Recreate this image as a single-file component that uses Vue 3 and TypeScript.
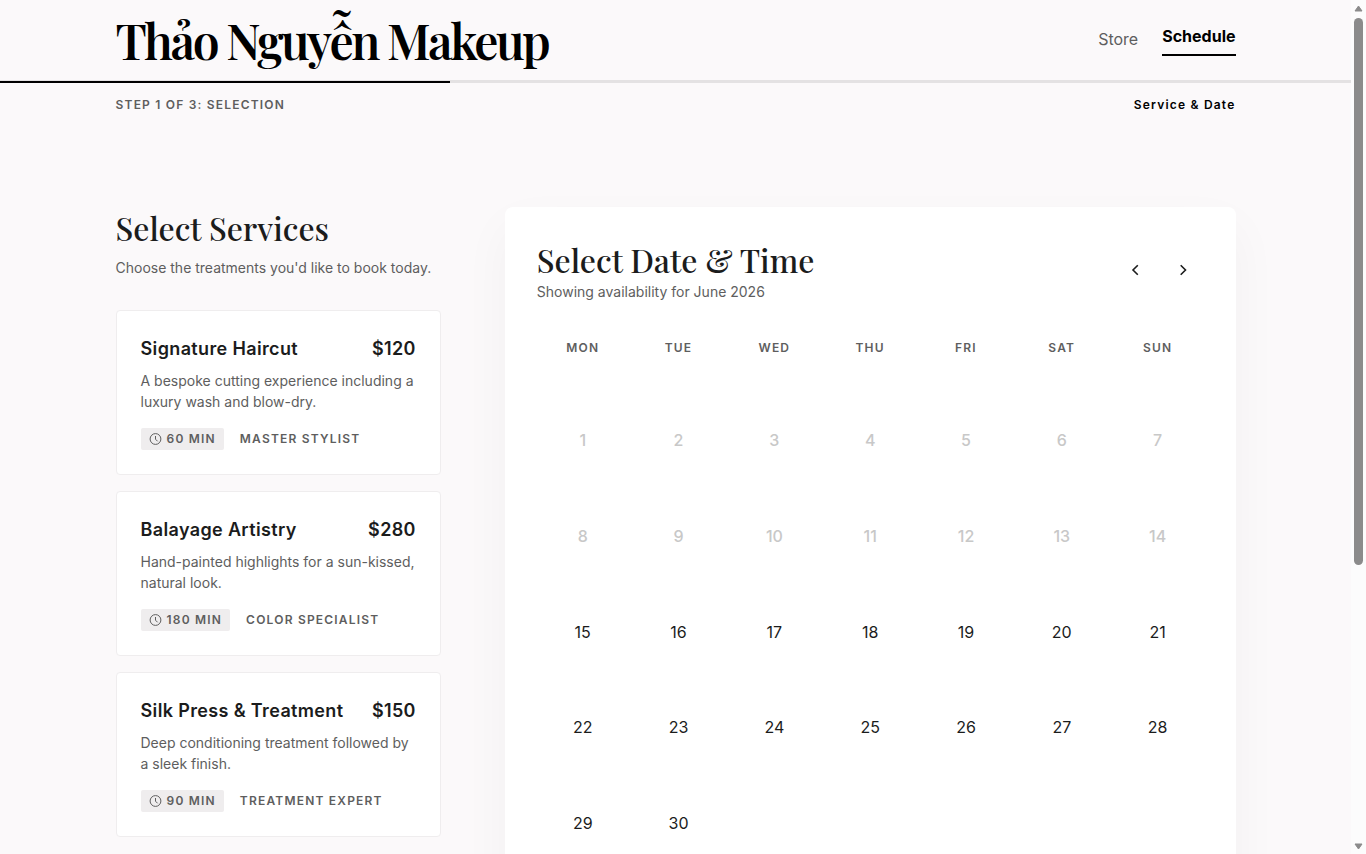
<script setup lang="ts">
interface Service {
  id: string
  name: string
  price: string
  description: string
  minutes: number
  staff: string
}

interface Day {
  date: number
  past: boolean
}

const services: Service[] = [
  {
    id: 'haircut',
    name: 'Signature Haircut',
    price: '$120',
    description: 'A bespoke cutting experience including a luxury wash and blow-dry.',
    minutes: 60,
    staff: 'Master Stylist',
  },
  {
    id: 'balayage',
    name: 'Balayage Artistry',
    price: '$280',
    description: 'Hand-painted highlights for a sun-kissed, natural look.',
    minutes: 180,
    staff: 'Color Specialist',
  },
  {
    id: 'silk-press',
    name: 'Silk Press & Treatment',
    price: '$150',
    description: 'Deep conditioning treatment followed by a sleek finish.',
    minutes: 90,
    staff: 'Treatment Expert',
  },
]

const weekdays: string[] = ['Mon', 'Tue', 'Wed', 'Thu', 'Fri', 'Sat', 'Sun']
const days: Day[] = Array.from({ length: 30 }, (_, i) => ({ date: i + 1, past: i < 14 }))
</script>

<template>
  <div class="window">
    <div class="page">
      <header class="header">
        <div class="container bar">
          <a class="brand" href="#">Thảo Nguyễn Makeup</a>
          <nav class="nav">
            <a class="link" href="#store">Store</a>
            <a class="link active" href="#schedule" aria-current="page">Schedule</a>
          </nav>
        </div>
      </header>
      <div class="progress"><div class="progress-fill"></div></div>
      <div class="container steps">
        <span class="step">Step 1 of 3: Selection</span>
        <span class="step-name">Service &amp; Date</span>
      </div>

      <main class="container content">
        <section>
          <div class="intro">
            <h2 class="heading">Select Services</h2>
            <p class="sub">Choose the treatments you'd like to book today.</p>
          </div>
          <div class="services">
            <button v-for="s in services" :key="s.id" type="button" class="service">
              <span class="service-head">
                <span>{{ s.name }}</span>
                <span>{{ s.price }}</span>
              </span>
              <span class="description">{{ s.description }}</span>
              <span class="meta">
                <span class="duration">
                  <svg class="clock" viewBox="0 0 14 14" aria-hidden="true">
                    <circle cx="6.5" cy="7" r="5.4" />
                    <path d="M6.5 4v3.2l2.1 2.1" />
                  </svg>
                  {{ s.minutes }} min
                </span>
                <span>{{ s.staff }}</span>
              </span>
            </button>
          </div>
        </section>

        <section class="calendar">
          <div class="calendar-head">
            <div>
              <h2 class="heading">Select Date &amp; Time</h2>
              <p class="sub">Showing availability for June 2026</p>
            </div>
            <div class="arrows">
              <button type="button" class="arrow" aria-label="Previous month">
                <svg viewBox="0 0 24 24" aria-hidden="true"><path d="M13.8 6.2 9 11l4.8 4.8" /></svg>
              </button>
              <button type="button" class="arrow" aria-label="Next month">
                <svg viewBox="0 0 24 24" aria-hidden="true"><path d="M8.7 6.2l4.8 4.8-4.8 4.8" /></svg>
              </button>
            </div>
          </div>
          <div class="grid weekdays">
            <span v-for="w in weekdays" :key="w">{{ w }}</span>
          </div>
          <div class="grid">
            <button v-for="d in days" :key="d.date" type="button" class="day" :disabled="d.past">
              {{ d.date }}
            </button>
          </div>
        </section>
      </main>
    </div>

    <div class="scrollbar" aria-hidden="true">
      <svg class="tip" viewBox="0 0 9 7"><path d="M4.5 1 8 6H1z" /></svg>
      <div class="track"><div class="thumb"></div></div>
      <svg class="tip" viewBox="0 0 9 7"><path d="M4.5 6 1 1h7z" /></svg>
    </div>
  </div>
</template>

<style>
body {
  margin: 0;
  background: #fbf9fa;
}
</style>

<style scoped>
.window {
  display: flex;
  height: 100vh;
  overflow: hidden;
  color: #1b1c1c;
  font-family: Inter, "Liberation Sans", sans-serif;
  font-size: 16px;
  line-height: 24px;
}

.page {
  flex: 1;
  min-width: 0;
}

.container {
  box-sizing: border-box;
  max-width: 1248px;
  margin: 0 auto;
  padding: 0 64px;
}

.header {
  border-bottom: 1px solid #e4e2e3;
}

.bar {
  display: flex;
  align-items: center;
  justify-content: space-between;
  height: 80px;
}

.brand {
  color: #000;
  font-family: "Playfair Display", "Liberation Serif", serif;
  font-size: 48px;
  font-weight: 600;
  line-height: 56px;
  letter-spacing: -0.05em;
  text-decoration: none;
  white-space: nowrap;
}

.nav {
  display: flex;
  align-items: center;
  gap: 24px;
}

.link {
  padding-bottom: 2px;
  color: #5e5e5e;
  text-decoration: none;
}

.link.active {
  padding-bottom: 6px;
  border-bottom: 2px solid #000;
  color: #000;
  font-weight: 700;
}

.progress {
  height: 2px;
  background: #e4e2e3;
}

.progress-fill {
  width: 33.3333%;
  height: 100%;
  background: #000;
}

.steps {
  display: flex;
  justify-content: space-between;
  padding-top: 14px;
  font-size: 12px;
  font-weight: 600;
  line-height: 16px;
  letter-spacing: 0.1em;
}

.step {
  color: #5e5e5e;
  text-transform: uppercase;
}

.step-name {
  color: #000;
}

.content {
  display: grid;
  grid-template-columns: calc(100% / 3 - 48px) 1fr;
  align-items: start;
  gap: 64px;
  padding-top: 94px;
}

.intro {
  margin-bottom: 32px;
}

.intro .heading {
  margin-bottom: 8px;
}

.heading {
  margin: 0;
  font-family: "Playfair Display", "Liberation Serif", serif;
  font-size: 32px;
  font-weight: 500;
  line-height: 42px;
}

.sub {
  margin: 0;
  color: #5e5e5e;
  font-size: 14px;
  line-height: 21px;
}

.services {
  display: grid;
  gap: 16px;
}

.service {
  display: block;
  width: 100%;
  padding: 24px;
  border: 1px solid #efedee;
  border-radius: 4px;
  background: #fff;
  color: inherit;
  font: inherit;
  text-align: left;
}

.service-head {
  display: flex;
  justify-content: space-between;
  margin-bottom: 8px;
  font-size: 18px;
  font-weight: 600;
  line-height: 27px;
  letter-spacing: 0.02em;
}

.description {
  display: block;
  margin-bottom: 16px;
  color: #5e5e5e;
  font-size: 14px;
  line-height: 21px;
}

.meta {
  display: flex;
  align-items: center;
  gap: 16px;
  color: #5e5e5e;
  font-size: 12px;
  font-weight: 600;
  line-height: 14px;
  letter-spacing: 0.1em;
  text-transform: uppercase;
}

.duration {
  display: flex;
  align-items: center;
  gap: 4px;
  padding: 4px 8px;
  border-radius: 2px;
  background: #efedee;
}

.clock {
  width: 14px;
  height: 14px;
  fill: none;
  stroke: currentColor;
  stroke-width: 1;
}

.calendar {
  padding: 32px;
  border-radius: 8px;
  background: #fff;
  box-shadow: 0 20px 50px rgba(0, 0, 0, 0.04);
}

.calendar-head {
  display: flex;
  align-items: center;
  justify-content: space-between;
  margin-bottom: 32px;
}

.arrows {
  display: flex;
  gap: 8px;
}

.arrow {
  display: grid;
  place-items: center;
  width: 40px;
  height: 40px;
  padding: 0;
  border: 0;
  border-radius: 50%;
  background: none;
  color: inherit;
}

.arrow svg {
  width: 24px;
  height: 24px;
  fill: none;
  stroke: currentColor;
  stroke-width: 1.6;
}

.grid {
  display: grid;
  grid-template-columns: repeat(7, 1fr);
  gap: 4px;
}

.weekdays {
  margin-bottom: 32px;
  color: #5e5e5e;
  font-size: 12px;
  font-weight: 600;
  line-height: 28px;
  letter-spacing: 0.1em;
  text-align: center;
  text-transform: uppercase;
}

.day {
  aspect-ratio: 1;
  padding: 0;
  border: 0;
  border-radius: 4px;
  background: none;
  color: inherit;
  font: inherit;
}

.day:disabled {
  color: #c8c8c8;
  font-weight: 500;
}

.scrollbar {
  display: flex;
  flex-direction: column;
  align-items: center;
  gap: 6px;
  box-sizing: border-box;
  width: 15px;
  padding: 5px 0 4px;
  background: #fcfcfc;
}

.tip {
  width: 9px;
  height: 7px;
  fill: #8b8b8b;
  stroke: #8b8b8b;
  stroke-linejoin: round;
}

.track {
  flex: 1;
  width: 9px;
}

.thumb {
  height: 66.8%;
  border-radius: 5px;
  background: #8b8b8b;
}
</style>
